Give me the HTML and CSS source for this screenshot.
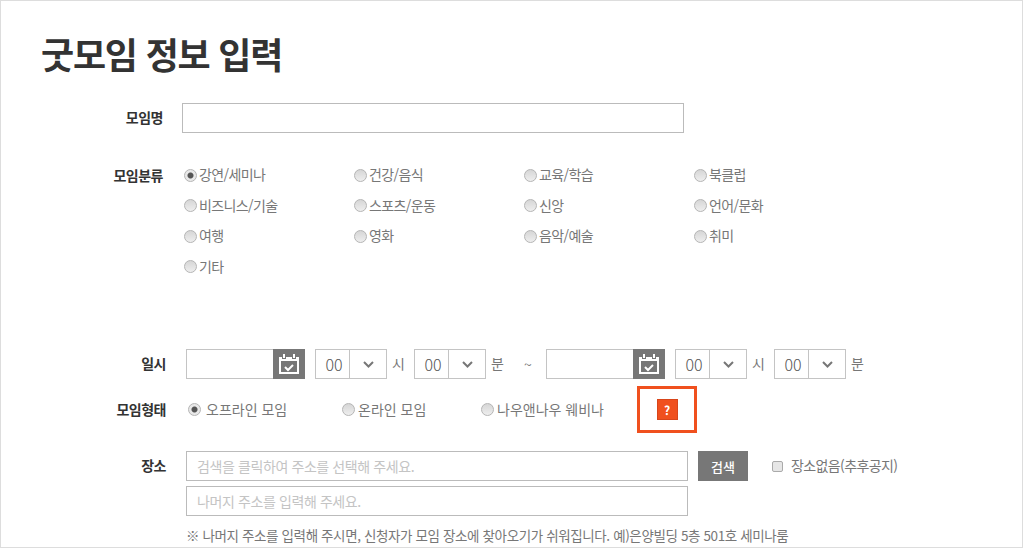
FILE: index.html
```html
<!DOCTYPE html>
<html lang="ko">
<head>
    <meta charset="UTF-8">
    <meta name="viewport" content="width=device-width, initial-scale=1.0">
    <title>굿모임 정보 입력</title>
    <link rel="stylesheet" href="styles.css">
</head>
<body>
    <div class="page">
        <h1 class="title">굿모임 정보 입력</h1>

        <div class="row row-name">
            <label class="label label-narrow">모임명</label>
            <input type="text" class="text-input name-input">
        </div>

        <div class="row row-category">
            <label class="label label-narrow">모임분류</label>
            <div class="category-grid">
                <label class="radio-item"><input type="radio" name="category" checked>강연/세미나</label>
                <label class="radio-item"><input type="radio" name="category">건강/음식</label>
                <label class="radio-item"><input type="radio" name="category">교육/학습</label>
                <label class="radio-item"><input type="radio" name="category">북클럽</label>
                <label class="radio-item"><input type="radio" name="category">비즈니스/기술</label>
                <label class="radio-item"><input type="radio" name="category">스포츠/운동</label>
                <label class="radio-item"><input type="radio" name="category">신앙</label>
                <label class="radio-item"><input type="radio" name="category">언어/문화</label>
                <label class="radio-item"><input type="radio" name="category">여행</label>
                <label class="radio-item"><input type="radio" name="category">영화</label>
                <label class="radio-item"><input type="radio" name="category">음악/예술</label>
                <label class="radio-item"><input type="radio" name="category">취미</label>
                <label class="radio-item"><input type="radio" name="category">기타</label>
            </div>
        </div>

        <div class="row row-date">
            <label class="label">일시</label>
            <div class="date-field">
                <input type="text" class="date-input">
                <button class="cal-btn" aria-label="달력">
                    <svg width="20" height="20" viewBox="0 0 20 20"><path d="M1 4h18v15H1z" fill="none" stroke="#fff" stroke-width="2"/><path d="M1 4h18v3H1z" fill="#fff"/><path d="M5 0v5M15 0v5" stroke="#777" stroke-width="4"/><path d="M5 0v4M15 0v4" stroke="#fff" stroke-width="2"/><path d="M6 13l3 3 5-5" fill="none" stroke="#fff" stroke-width="2"/></svg>
                </button>
            </div>
            <div class="time-select"><span class="time-value">00</span><span class="time-arrow"><svg width="11" height="7" viewBox="0 0 11 7"><path d="M1 1l4.500 4.500L10 1" fill="none" stroke="#777" stroke-width="2"/></svg></span></div>
            <span class="unit">시</span>
            <div class="time-select"><span class="time-value">00</span><span class="time-arrow"><svg width="11" height="7" viewBox="0 0 11 7"><path d="M1 1l4.500 4.500L10 1" fill="none" stroke="#777" stroke-width="2"/></svg></span></div>
            <span class="unit">분</span>
            <span class="tilde">~</span>
            <div class="date-field date-field-end">
                <input type="text" class="date-input">
                <button class="cal-btn" aria-label="달력">
                    <svg width="20" height="20" viewBox="0 0 20 20"><path d="M1 4h18v15H1z" fill="none" stroke="#fff" stroke-width="2"/><path d="M1 4h18v3H1z" fill="#fff"/><path d="M5 0v5M15 0v5" stroke="#777" stroke-width="4"/><path d="M5 0v4M15 0v4" stroke="#fff" stroke-width="2"/><path d="M6 13l3 3 5-5" fill="none" stroke="#fff" stroke-width="2"/></svg>
                </button>
            </div>
            <div class="time-select"><span class="time-value">00</span><span class="time-arrow"><svg width="11" height="7" viewBox="0 0 11 7"><path d="M1 1l4.500 4.500L10 1" fill="none" stroke="#777" stroke-width="2"/></svg></span></div>
            <span class="unit">시</span>
            <div class="time-select"><span class="time-value">00</span><span class="time-arrow"><svg width="11" height="7" viewBox="0 0 11 7"><path d="M1 1l4.500 4.500L10 1" fill="none" stroke="#777" stroke-width="2"/></svg></span></div>
            <span class="unit">분</span>
        </div>

        <div class="row row-type">
            <label class="label">모임형태</label>
            <label class="radio-item type-offline"><input type="radio" name="type" checked>오프라인 모임</label>
            <label class="radio-item type-online"><input type="radio" name="type">온라인 모임</label>
            <label class="radio-item type-webinar"><input type="radio" name="type">나우앤나우 웨비나</label>
            <div class="help-box"><span class="help-badge">?</span></div>
        </div>

        <div class="row row-place">
            <label class="label">장소</label>
            <input type="text" class="text-input place-input" placeholder="검색을 클릭하여 주소를 선택해 주세요.">
            <button class="search-btn">검색</button>
            <label class="check-item"><input type="checkbox">장소없음(추후공지)</label>
        </div>
        <div class="row row-detail">
            <input type="text" class="text-input place-input" placeholder="나머지 주소를 입력해 주세요.">
        </div>
        <p class="note">※ 나머지 주소를 입력해 주시면, 신청자가 모임 장소에 찾아오기가 쉬워집니다. 예)은양빌딩 5층 501호 세미나룸</p>
    </div>
</body>
</html>
```

FILE: styles.css
```css
* {
    box-sizing: border-box;
}
body {
    margin: 0;
    background: #fff;
    font-family: "Noto Sans CJK KR", "Noto Sans", sans-serif;
    font-size: 14px;
    color: #777;
}
.page {
    width: 1023px;
    height: 548px;
    border: 1px solid #ddd;
    overflow: hidden;
}
.title {
    margin: 27px 0 0 40px;
    height: 50px;
    font-size: 36px;
    line-height: 50px;
    font-weight: 700;
    letter-spacing: -1.2px;
    color: #333;
}
.row {
    display: flex;
    align-items: center;
}
.label {
    width: 165px;
    flex: none;
    padding-bottom: 2px;
    text-align: right;
    font-size: 14px;
    font-weight: 700;
    letter-spacing: -0.5px;
    color: #333;
}
.label-narrow {
    width: 162px;
}
.text-input {
    height: 30px;
    border: 1px solid #bbb;
    background: #fff;
    padding: 0 10px;
    font: inherit;
    letter-spacing: -0.4px;
}
.text-input::placeholder {
    color: #c4c4c4;
    opacity: 1;
}
.row-name {
    margin-top: 25px;
}
.name-input {
    width: 502px;
    margin-left: 19px;
}
.row-category {
    margin-top: 27px;
    align-items: flex-start;
}
.row-category .label {
    line-height: 30px;
}
.category-grid {
    display: grid;
    grid-template-columns: repeat(4, 170px);
    grid-auto-rows: 30.500px;
    margin-left: 21px;
}
.radio-item {
    display: flex;
    align-items: center;
    padding-bottom: 2px;
    letter-spacing: -0.6px;
    white-space: nowrap;
}
.radio-item input {
    appearance: none;
    width: 13px;
    height: 13px;
    margin: 2px 2px 0 0;
    border: 1px solid #b5b5b5;
    border-radius: 50%;
    background: linear-gradient(#d6d6d6, #eee);
    flex: none;
}
.radio-item input:checked {
    background: radial-gradient(circle, #555 0 2.500px, #e8e8e8 3.500px);
}
.row-date {
    margin-top: 67px;
    height: 30px;
}
.date-field {
    display: flex;
    width: 119px;
    height: 30px;
    margin-left: 20px;
}
.date-field-end {
    margin-left: 0;
}
.date-input {
    width: 87px;
    height: 30px;
    border: 1px solid #c4c4c4;
    border-right: 0;
    background: #fff;
}
.cal-btn {
    width: 32px;
    height: 30px;
    padding: 0;
    border: 0;
    background: #777;
    display: flex;
    align-items: center;
    justify-content: center;
}
.time-select {
    display: flex;
    width: 72px;
    height: 30px;
    margin-left: 10px;
    border: 1px solid #c4c4c4;
    background: #fff;
}
.time-value {
    width: 34px;
    padding-left: 3px;
    border-right: 1px solid #c4c4c4;
    text-align: center;
    font-size: 16px;
    font-weight: 300;
    line-height: 28px;
    color: #555;
}
.time-arrow {
    flex: 1;
    display: flex;
    align-items: center;
    justify-content: center;
}
.unit {
    width: 17px;
    margin-left: 5px;
    padding-bottom: 2px;
    font-size: 14px;
}
.unit + .time-select {
    margin-left: 5px;
}
.tilde {
    margin-left: 16px;
    width: 22px;
}
.row-type {
    height: 47px;
    margin-top: 7px;
}
.row-type .radio-item {
    letter-spacing: 0;
}
.type-offline {
    margin-left: 22px;
    width: 154px;
}
.row-type .type-offline input {
    margin-right: 5px;
}
.type-online {
    width: 139px;
}
.row-type .type-online input,
.row-type .type-webinar input {
    margin-right: 3px;
}
.type-webinar {
    width: 156px;
}
.help-box {
    width: 60px;
    height: 47px;
    border: 3px solid #f0501e;
    display: flex;
    align-items: center;
    justify-content: center;
}
.help-badge {
    width: 21px;
    height: 21px;
    background: #f0501e;
    border: 1px solid #d8451a;
    color: #fff;
    font-size: 12px;
    font-weight: 700;
    line-height: 19px;
    text-align: center;
}
.row-place {
    margin-top: 18px;
}
.place-input {
    width: 502px;
    margin-left: 20px;
}
.search-btn {
    width: 50px;
    height: 30px;
    margin-left: 10px;
    padding: 0;
    border: 0;
    background: #777;
    color: #fff;
    font: inherit;
    font-size: 13px;
    font-weight: 500;
}
.check-item {
    display: flex;
    align-items: center;
    margin-left: 25px;
    padding-bottom: 2px;
    letter-spacing: -0.6px;
    white-space: nowrap;
}
.check-item input {
    appearance: none;
    width: 11px;
    height: 11px;
    margin: 2px 8px 0 -1px;
    border: 1px solid #aaa;
    border-radius: 2px;
    background: #e6e6e6;
}
.row-detail {
    margin-top: 5px;
    padding-left: 165px;
}
.note {
    margin: 9px 0 0 185px;
    font-size: 13.500px;
    line-height: 20px;
    letter-spacing: -0.38px;
    white-space: nowrap;
}
```
